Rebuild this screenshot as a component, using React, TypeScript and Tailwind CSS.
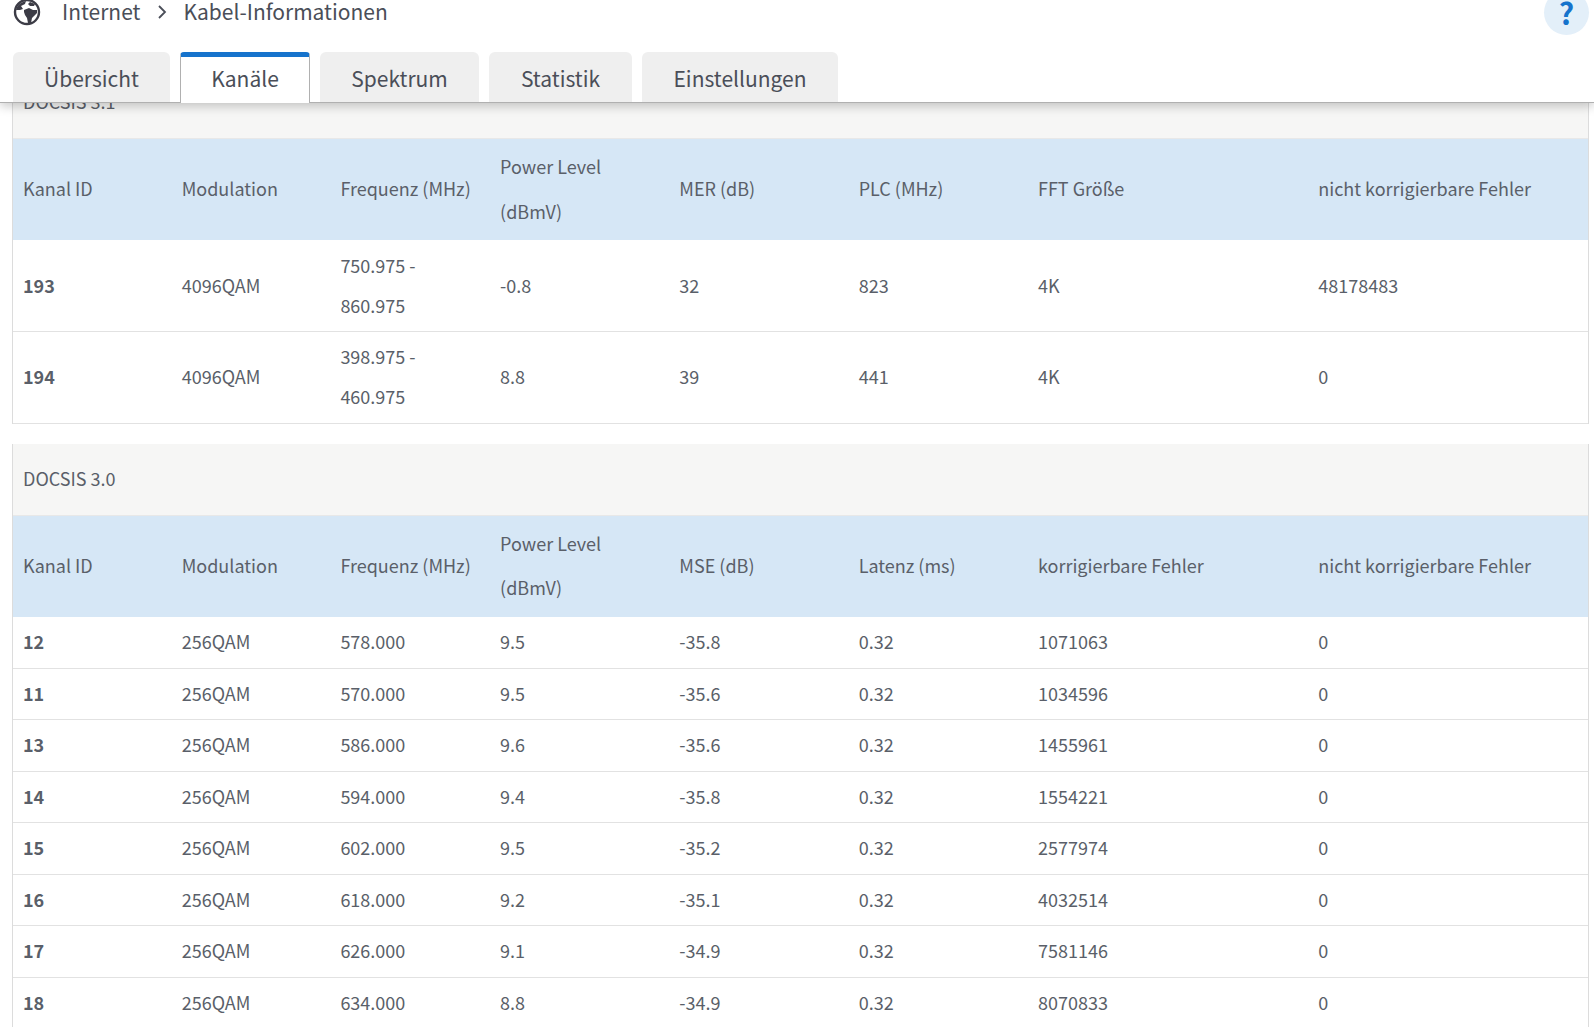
const font = { fontFamily: '"Noto Sans CJK SC", "Noto Sans", sans-serif' };

const widths = ['w-[158.7px]', 'w-[158.7px]', 'w-[159.7px]', 'w-[179.3px]', 'w-[179.3px]', 'w-[179.3px]', 'w-[280.3px]', 'w-[279.7px]'];

function Table({ title, head, rows, rowH, first }: { title: string; head: string[]; rows: string[][]; rowH: string; first?: boolean }) {
  return (
    <div className="ml-[12px] w-[1577px] border-x border-[#dcdcdc] mb-[20px]">
      <div className={`${first ? 'h-[71px] pt-[17px]' : 'h-[72px] pt-[18px]'} bg-[#f6f6f5] border-b border-[#e8e8e8] pl-[10px] text-[18px] leading-[32px]`}>{title}</div>
      <table className="table-fixed w-full border-collapse">
        <colgroup>
          {widths.map((w, i) => <col key={i} className={w} />)}
        </colgroup>
        <thead>
          <tr className="bg-[#d6e7f6] h-[101px]">
            {head.map((h, i) => (
              <th key={i} className="font-normal text-left align-middle px-[10px] pb-[2px] leading-[44.5px]">{h}</th>
            ))}
          </tr>
        </thead>
        <tbody>
          {rows.map((r, i) => (
            <tr key={i} className={`${rowH} border-b border-[#e2e2e2]`}>
              {r.map((c, j) => (
                <td key={j} className={`px-[10px] pb-[2px] align-middle ${j === 0 ? 'font-bold' : ''} ${j === 2 && first ? 'leading-[40px]' : 'leading-[30px]'}`}>{c}</td>
              ))}
            </tr>
          ))}
        </tbody>
      </table>
    </div>
  );
}

const h31 = ['Kanal ID', 'Modulation', 'Frequenz (MHz)', 'Power Level (dBmV)', 'MER (dB)', 'PLC (MHz)', 'FFT Größe', 'nicht korrigierbare Fehler'];
const r31 = [
  ['193', '4096QAM', '750.975 - 860.975', '-0.8', '32', '823', '4K', '48178483'],
  ['194', '4096QAM', '398.975 - 460.975', '8.8', '39', '441', '4K', '0'],
];
const h30 = ['Kanal ID', 'Modulation', 'Frequenz (MHz)', 'Power Level (dBmV)', 'MSE (dB)', 'Latenz (ms)', 'korrigierbare Fehler', 'nicht korrigierbare Fehler'];
const r30 = [
  ['12', '256QAM', '578.000', '9.5', '-35.8', '0.32', '1071063', '0'],
  ['11', '256QAM', '570.000', '9.5', '-35.6', '0.32', '1034596', '0'],
  ['13', '256QAM', '586.000', '9.6', '-35.6', '0.32', '1455961', '0'],
  ['14', '256QAM', '594.000', '9.4', '-35.8', '0.32', '1554221', '0'],
  ['15', '256QAM', '602.000', '9.5', '-35.2', '0.32', '2577974', '0'],
  ['16', '256QAM', '618.000', '9.2', '-35.1', '0.32', '4032514', '0'],
  ['17', '256QAM', '626.000', '9.1', '-34.9', '0.32', '7581146', '0'],
  ['18', '256QAM', '634.000', '8.8', '-34.9', '0.32', '8070833', '0'],
];

const tabs = ['Übersicht', 'Kanäle', 'Spektrum', 'Statistik', 'Einstellungen'];

function Globe() {
  return (
    <svg viewBox="0 0 28 28" className="w-[28px] h-[28px] shrink-0">
      <circle cx="14" cy="14" r="12" fill="#fff" stroke="#3c3c46" strokeWidth="2.4" />
      <path d="M3 12 C4 7 8 4 13 3 L12 6 L8 8 L10 11 L7 12 Z M11 12 L16 10 L20 12 L24 12 L24 15 L21 18 L19 20 L18 25 L15 25 L14 20 L12 17 L11 14 Z M17 4 L22 6 L21 8 L17 8 L15 6 Z" fill="#3c3c46" />
    </svg>
  );
}

export default function App() {
  return (
    <div style={font} className="w-[1594px] h-[1027px] overflow-hidden flex flex-col bg-white text-[18px] text-[#5a5f69]">
      <header className="h-[103px] shrink-0 bg-white border-b border-[#b0b0b0] shadow-[0_3px_10px_rgba(0,0,0,0.22)] relative z-10 flex flex-col">
        <div className="h-[52px] -mt-[14px] flex items-center pl-[13px] pr-[5px] text-[#4a4e58] text-[21px]">
          <Globe />
          <span className="ml-[21px]">Internet</span>
          <svg viewBox="0 0 12 16" className="w-[12px] h-[16px] ml-[16px] mr-[15px]"><path d="M3 2l6 6-6 6" fill="none" stroke="#4a4e58" strokeWidth="1.8" /></svg>
          <span>Kabel-Informationen</span>
          <div className="ml-auto w-[45px] h-[45px] rounded-full bg-[#e3eff9] flex items-center justify-center text-[#1673cc] font-bold text-[30px]">?</div>
        </div>
        <nav className="flex pl-[13px] mt-auto gap-[10px] h-[50px] text-[21px] text-[#4a4e58]">
          {tabs.map((t, i) => (
            <div
              key={t}
              className={
                i === 1
                  ? 'w-[130px] h-[51px] pb-[3px] flex items-center justify-center rounded-t-[4px] bg-white border-t-[5px] border-x border-t-[#1673cc] border-x-[#b0b0b0]'
                  : `${['w-[157px]', '', 'w-[159px]', 'w-[143px]', 'w-[196px]'][i]} h-[50px] pt-[4px] flex items-center justify-center rounded-t-[6px] bg-[#efefef]`
              }
            >
              {t}
            </div>
          ))}
        </nav>
      </header>
      <main className="flex-1 overflow-hidden">
        <div className="-mt-[35px]">
          <Table title="DOCSIS 3.1" head={h31} rows={r31} rowH="h-[91.5px]" first />
          <Table title="DOCSIS 3.0" head={h30} rows={r30} rowH="h-[51.5px]" />
        </div>
      </main>
    </div>
  );
}
